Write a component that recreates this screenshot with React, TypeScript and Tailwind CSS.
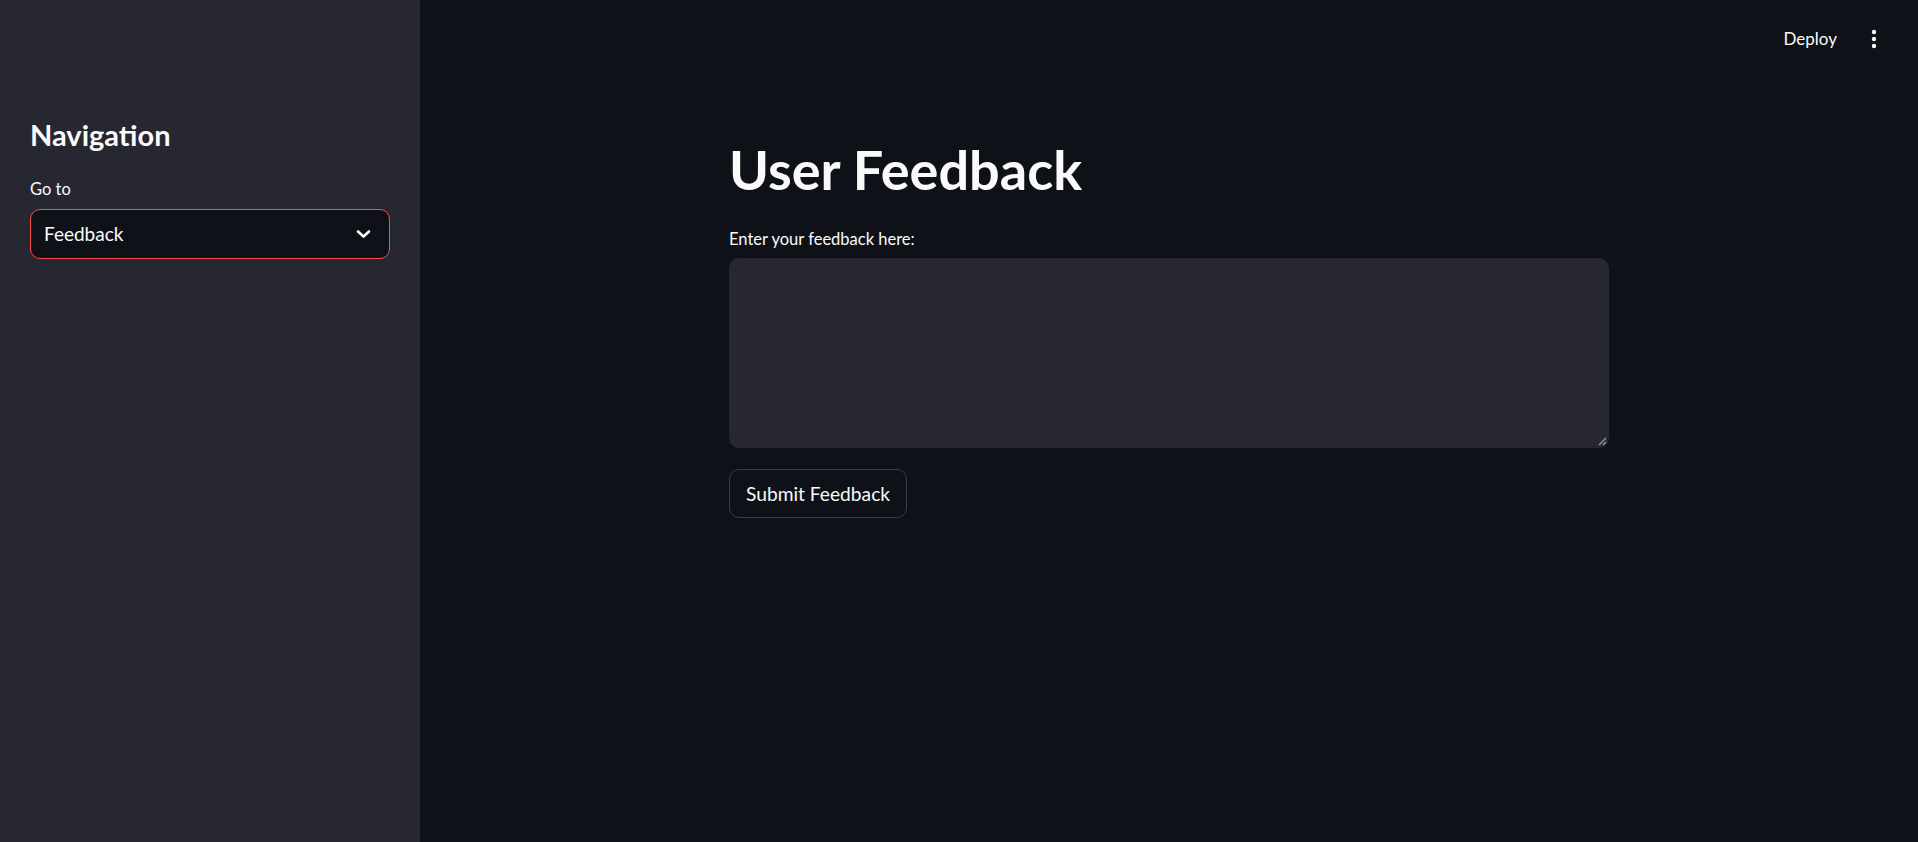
import React from "react";

export default function App() {
  const font = { fontFamily: "Lato, 'Noto Sans', sans-serif" };
  return (
    <div className="flex w-[1918px] h-[842px] bg-[#0e1117] text-[#fafafa] overflow-hidden" style={font}>
      <aside className="w-[420px] shrink-0 h-full bg-[#262730] pl-[30px] pr-[30px] pt-[115px]">
        <h2 className="text-[29px] leading-[40px] font-bold">Navigation</h2>
        <div className="mt-[22px] text-[16.5px] leading-[24px]">Go to</div>
        <div className="mt-[8px] w-[360px] h-[50px] rounded-[10px] border border-[#ff4b4b] bg-[#0e1117] flex items-center justify-between pl-[13px] pr-[18px]">
          <span className="text-[19px] leading-[24px]">Feedback</span>
          <svg width="15" height="10" viewBox="0 0 15 10" fill="none">
            <path d="M2 2.5 L7.5 7.5 L13 2.5" stroke="#fafafa" strokeWidth="2.6" strokeLinecap="round" strokeLinejoin="round" />
          </svg>
        </div>
      </aside>
      <main className="flex-1 flex flex-col">
        <header className="h-[78px] flex items-center justify-end pr-[41px] gap-[34px]">
          <span className="text-[17px] leading-[24px]">Deploy</span>
          <svg width="6" height="20" viewBox="0 0 6 20">
            <circle cx="3" cy="3" r="2.2" fill="#fafafa" />
            <circle cx="3" cy="10" r="2.2" fill="#fafafa" />
            <circle cx="3" cy="17" r="2.2" fill="#fafafa" />
          </svg>
        </header>
        <div className="w-[880px] mx-auto pt-[60px]">
          <h1 className="text-[54px] leading-[64px] font-bold">User Feedback</h1>
          <div className="mt-[25px] text-[16.5px] leading-[24px]">Enter your feedback here:</div>
          <div className="relative mt-[7px] h-[190px] rounded-[10px] bg-[#262730]">
            <svg className="absolute right-[2px] bottom-[2px]" width="10" height="10" viewBox="0 0 10 10">
              <path d="M9 2 L2 9 M9 6 L6 9" stroke="#9a9aa0" strokeWidth="1.3" />
            </svg>
          </div>
          <button className="mt-[21px] h-[49px] px-[16px] rounded-[10px] border border-[#3a3d46] bg-[#0e1117] text-[19.2px] leading-[24px] text-[#fafafa]">
            Submit Feedback
          </button>
        </div>
      </main>
    </div>
  );
}
